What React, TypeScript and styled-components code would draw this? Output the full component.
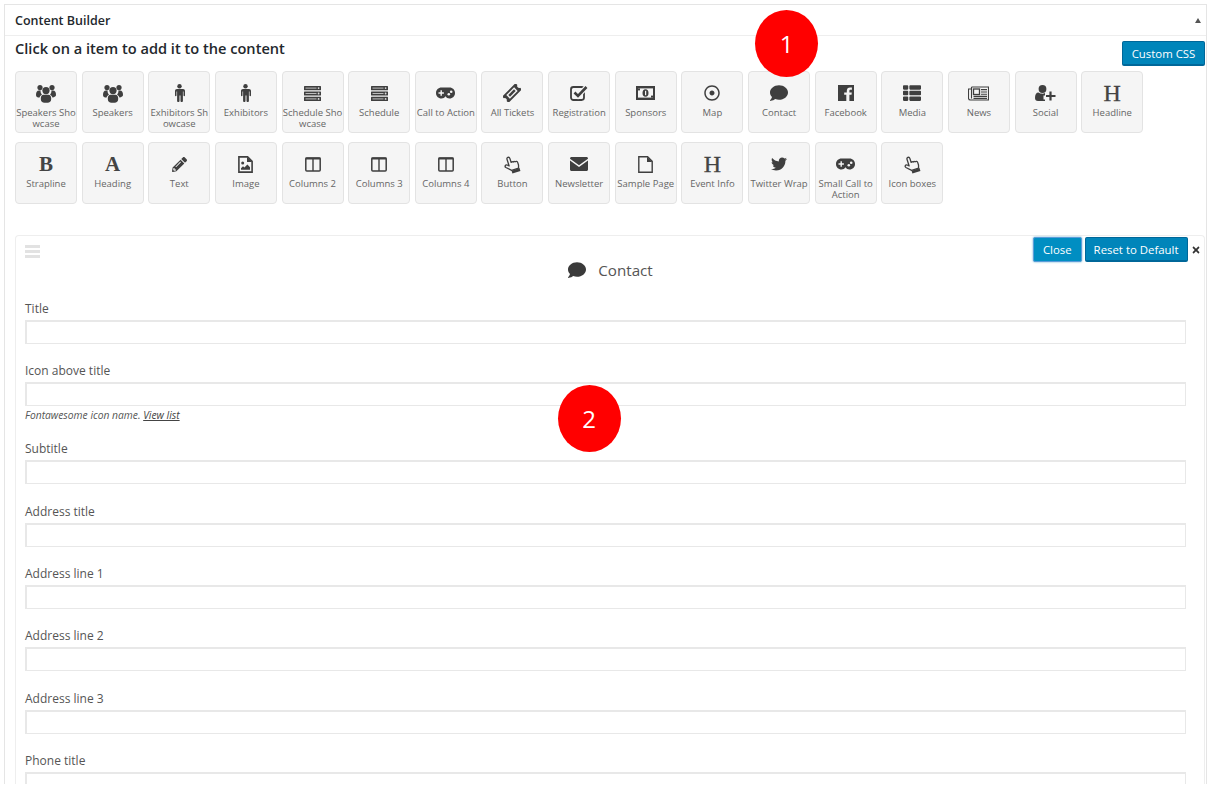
import React from "react";
import styled, { createGlobalStyle } from "styled-components";
import { FaRegDotCircle, FaComment, FaThList, FaPencilAlt, FaTwitter, FaTimes } from "react-icons/fa";

const Global = createGlobalStyle`
  html, body { margin: 0; padding: 0; background: #fff; }
  body { font-family: "Open Sans", "Liberation Sans", sans-serif; color: #444; overflow: hidden; }
`;

const Page = styled.div`
  position: relative;
  height: 802px;
  padding: 4px 5px 0 4px;
  box-sizing: border-box;
`;

const Panel = styled.section`
  height: 780px;
  border: 1px solid #e5e5e5;
  border-bottom: 0;
  box-sizing: border-box;
  overflow: hidden;
  background: #fff;
`;

const PanelHeader = styled.header`
  height: 30px;
  border-bottom: 1px solid #eee;
  display: flex;
  align-items: center;
  justify-content: space-between;
  padding: 0 5px 0 10px;
`;

const PanelTitle = styled.h2`
  margin: 0;
  font-size: 12.5px;
  font-weight: 600;
  color: #23282d;
`;

const Caret = styled.span`
  width: 0;
  height: 0;
  border-left: 3.5px solid transparent;
  border-right: 3.5px solid transparent;
  border-bottom: 5px solid #555;
`;

const Body = styled.div`
  padding: 0 1px 0 10px;
`;

const Intro = styled.div`
  display: flex;
  align-items: flex-start;
  justify-content: space-between;
  height: 35px;
`;

const Lead = styled.p`
  margin: 2px 0 0;
  font-size: 14.6px;
  line-height: 20px;
  font-weight: 600;
  color: #23282d;
`;

const PrimaryButton = styled.button<{ $focus?: boolean }>`
  height: 25px;
  padding: 0 9px;
  border-radius: 2px;
  border: 1px solid ${(p) => (p.$focus ? "#5b9dd9" : "#006799")};
  border-bottom-width: ${(p) => (p.$focus ? "1px" : "2px")};
  background: ${(p) => (p.$focus ? "#008ec2" : "#0085ba")};
  color: #fff;
  font-family: inherit;
  font-size: 11.4px;
  white-space: nowrap;
  box-shadow: ${(p) => (p.$focus ? "0 0 2px rgba(30,140,190,.8)" : "none")};
`;

const ResetButton = styled(PrimaryButton)`
  padding: 0 8px;
`;

const CssButton = styled(PrimaryButton)`
  margin-top: 5px;
  width: 83px;
  padding: 0;
`;

const Tiles = styled.div`
  display: grid;
  grid-template-columns: repeat(17, 62px);
  column-gap: 4.65px;
  row-gap: 9px;
  grid-auto-rows: 62px;
`;

const TileBox = styled.div`
  box-sizing: border-box;
  border: 1px solid #e3e3e3;
  border-radius: 4px;
  background: #f5f5f5;
  display: flex;
  flex-direction: column;
  align-items: center;
  padding: 12px 0 0;
  text-align: center;
`;

const TileIcon = styled.span`
  height: 18px;
  display: flex;
  align-items: center;
  justify-content: center;
  color: #3f3f3f;
`;

const GlyphIcon = styled(TileIcon)<{ $bold: boolean }>`
  font-family: "Liberation Serif", serif;
  font-weight: ${(p) => (p.$bold ? 700 : 400)};
  font-size: ${(p) => (p.$bold ? 21 : 24)}px;
  -webkit-text-stroke: ${(p) => (p.$bold ? "0" : "0.3px")} #444;
  color: #444;
`;

const TileLabel = styled.span<{ $wrap?: boolean }>`
  margin-top: 5px;
  width: 60px;
  flex-shrink: 0;
  font-size: 9.5px;
  line-height: 11px;
  color: #666;
  word-break: ${(p) => (p.$wrap ? "normal" : "break-all")};
`;

const Card = styled.div`
  margin-top: 30.5px;
  border: 1px solid #eee;
  border-bottom: 0;
  border-radius: 4px 4px 0 0;
  padding: 1.5px 0 0 9px;
  height: 560px;
  box-sizing: border-box;
`;

const CardTools = styled.div`
  display: flex;
  align-items: center;
  justify-content: space-between;
  height: 25px;
  padding-right: 3.5px;
`;

const Handle = styled.span`
  display: flex;
  flex-direction: column;
  gap: 2px;
  width: 15px;
  margin-top: 3px;
  span { height: 3px; background: #e2e2e2; }
`;

const ToolGroup = styled.div`
  display: flex;
  align-items: center;
  gap: 3px;
  svg { font-size: 10px; color: #333; }
`;

const CardTitle = styled.h3`
  margin: -1px 0 0;
  height: 18px;
  display: flex;
  align-items: center;
  justify-content: center;
  gap: 12px;
  font-size: 15.2px;
  font-weight: 400;
  color: #555;
  padding: 0 8px 2.4px 0;
  svg { font-size: 18px; color: #3a3a3a; }
`;

const Field = styled.div`
  margin-top: 18.4px;
  padding-right: 18.5px;
`;

const Label = styled.label`
  display: block;
  font-size: 12px;
  line-height: 17px;
  color: #555;
  margin-bottom: 3px;
`;

const TextInput = styled.input`
  display: block;
  box-sizing: border-box;
  width: 100%;
  height: 24px;
  margin: 0;
  border-style: solid;
  border-color: #e8e8e8;
  border-width: 2px 1px 1px 2px;
  background: #fff;
`;

const Help = styled.p`
  margin: 2px 0 -0.4px;
  font-size: 10.3px;
  line-height: 14px;
  font-style: italic;
  color: #555;
  u { color: #444; }
`;

const Marker = styled.div<{ $x: number; $y: number }>`
  position: absolute;
  left: ${(p) => p.$x}px;
  top: ${(p) => p.$y}px;
  width: 63px;
  height: 67px;
  border-radius: 50%;
  background: #ff0000;
  color: #fff;
  font-size: 24px;
  display: flex;
  align-items: center;
  justify-content: center;
`;

const D = "#3f3f3f";
const L = "#f5f5f5";

const Ico = ({ w, h, vb, children }: { w: number; h: number; vb: string; children: React.ReactNode }) => (
  <svg width={w} height={h} viewBox={vb} fill={D}>
    {children}
  </svg>
);

const UsersIcon = () => (
  <Ico w={20} h={19} vb="0 0 20 19">
    <circle cx="4" cy="3.6" r="2.6" />
    <circle cx="16" cy="3.6" r="2.6" />
    <path d="M0 11c0-3 1-4.6 3-4.6h1.6c-.2 1.8.4 3 1.4 4-1.4.8-2.2 1.8-2.4 3.2C1.4 13.6 0 13 0 11z" />
    <path d="M20 11c0-3-1-4.6-3-4.6h-1.6c.2 1.8-.4 3-1.4 4 1.4.8 2.2 1.8 2.4 3.2 2.2-.6 3.6-1.2 3.6-2.6z" />
    <circle cx="10" cy="6.6" r="3.6" />
    <path d="M4.8 14.6c0-2.4 1-3.9 2.8-3.9h4.8c1.8 0 2.8 1.5 2.8 3.9 0 1.8-.4 3.4-2.2 3.9-1.8.4-4.2.4-6 0-1.8-.5-2.2-2.1-2.2-3.9z" />
  </Ico>
);

const MaleIcon = () => (
  <Ico w={11} h={18} vb="0 0 11 18">
    <circle cx="5.5" cy="2.2" r="2.2" />
    <path d="M2 5h7c1.2 0 2 .8 2 2v4.4c0 1-1.5 1-1.5 0V7.6h-.6v9.3c0 1.3-2.4 1.3-2.4 0v-5.4h-1v5.4c0 1.3-2.4 1.3-2.4 0V7.6h-.6v3.8c0 1-1.5 1-1.5 0V7c0-1.2.8-2 2-2z" />
  </Ico>
);

const ServerIcon = () => (
  <Ico w={17} h={15} vb="0 0 17 15">
    {[0, 5.4, 10.8].map((y) => (
      <g key={y}>
        <rect x="0" y={y} width="17" height="4.2" rx=".5" />
        <rect x="1.5" y={y + 1.6} width="11" height="1" fill="#bbb" />
        <circle cx="14.6" cy={y + 2.1} r=".9" fill="#ddd" />
      </g>
    ))}
  </Ico>
);

const GamepadIcon = () => (
  <Ico w={19} h={12} vb="0 0 19 12">
    <path d="M5.5 0.5h8c3.2 0 5.5 2.4 5.5 5.5s-2.3 5.5-5.5 5.5c-1.7 0-3-.8-4-2.2-1 1.4-2.3 2.2-4 2.2C2.300 11.500 0 9.100 0 6S2.300.5 5.500.5z" />
    <path d="M4.500 3.300h1.400v2h2v1.400h-2v2H4.500v-2h-2V5.300h2z" fill={L} />
    <circle cx="12.800" cy="7.300" r="1.300" fill={L} />
    <circle cx="15.200" cy="4.800" r="1.300" fill={L} />
  </Ico>
);

const TicketIcon = () => (
  <Ico w={18} h={18} vb="0 0 18 18">
    <g transform="rotate(-45 9 9)">
      <path d="M-0.500 4.500h19v2.600a2 2 0 0 0 0 3.800v2.600h-19v-2.600a2 2 0 0 0 0-3.800z" />
      <rect x="3.500" y="6.500" width="11" height="5" fill={L} />
      <rect x="5" y="7.800" width="8" height="2.400" />
    </g>
  </Ico>
);

const CheckSquareIcon = () => (
  <Ico w={18} h={16} vb="0 0 18 16">
    <rect x="1" y="2" width="13" height="13" rx="2.400" fill="none" stroke={D} strokeWidth="1.800" />
    <path d="M4.500 7.500l3.500 3.500 8.500-9" fill="none" stroke={L} strokeWidth="5" />
    <path d="M4.500 7.500l3.500 3.500 8.500-9" fill="none" stroke={D} strokeWidth="2.600" />
  </Ico>
);

const MoneyIcon = () => (
  <Ico w={19} h={14} vb="0 0 19 14">
    <rect x="0" y="0" width="19" height="14" />
    <rect x="2" y="2.400" width="15" height="9.200" fill={L} />
    <rect x="2" y="2.400" width="2" height="2" />
    <rect x="15" y="9.600" width="2" height="2" />
    <ellipse cx="9.500" cy="7" rx="3" ry="3.800" />
    <rect x="9" y="4.800" width="1.200" height="4.400" fill={L} />
  </Ico>
);

const FacebookIcon = () => (
  <Ico w={16} h={16} vb="0 0 16 16">
    <path d="M0 0h16v16h-4.600V9.800h2.100l.3-2.400h-2.400V5.900c0-.7.2-1.200 1.200-1.200h1.300V2.500c-.2 0-1-.1-1.900-.1-1.900 0-3.200 1.200-3.200 3.300v1.700H6.200v2.400h2.100V16H0z" />
  </Ico>
);

const NewsIcon = () => (
  <Ico w={21} h={15} vb="0 0 21 15">
    <path d="M3.500 1h17v13H2.500a2 2 0 0 1-2-2V3h3M3.500 1v11.500" fill="none" stroke={D} strokeWidth="1.100" />
    <rect x="5.500" y="3" width="6" height="5.500" fill="none" stroke={D} strokeWidth="1.300" />
    <path d="M13 3.600h6M13 6h6M13 8.200h6M5.500 10.400h13.500M5.500 12.400h13.500" stroke={D} strokeWidth="1.100" />
  </Ico>
);

const UserPlusIcon = () => (
  <Ico w={21} h={16} vb="0 0 21 16">
    <circle cx="7.500" cy="4" r="3.900" />
    <path d="M0 13c0-3.500 1.200-5.500 3.500-5.500 1 .8 2.500 1.200 4 1.200 1 0 1.700-.2 2.500-.6v2.500H8.500v3.800H10V16H3c-2 0-3-1.200-3-3z" />
    <path d="M15.500 6.500v9M11 11h9.500" stroke={D} strokeWidth="2.200" />
  </Ico>
);

const ImageIcon = () => (
  <Ico w={15} h={17} vb="0 0 15 17">
    <path d="M.9.900h8.700l4.500 4.500v10.700H.9z" fill="none" stroke={D} strokeWidth="1.600" />
    <path d="M9 .900v5h5.100z" />
    <circle cx="4.700" cy="7" r="1.500" />
    <path d="M3 13.800v-1.600l2-2 1.400 1.400 3-3.200 2.600 2.800v2.600z" />
  </Ico>
);

const ColumnsIcon = () => (
  <Ico w={16} h={15} vb="0 0 16 15">
    <rect x=".8" y="1" width="14.400" height="13" rx="1" fill="none" stroke={D} strokeWidth="1.500" />
    <rect x="7.300" y="1" width="1.400" height="13" />
    <rect x=".5" y=".5" width="15" height="2" />
  </Ico>
);

const HandIcon = () => (
  <Ico w={18} h={19} vb="0 0 18 19">
    <g transform="rotate(-18 9 10)">
      <path
        d="M6 3c0-2 3-2 3 0v4.300c.5-.4 1.500-.4 2 .2.600-.3 1.500-.2 2 .4.900-.3 2.200.2 2.200 1.600v2.500l-.9 3H7L2.400 10.500C1.200 9 3 7.400 4.400 8.500L6 10z"
        fill={L}
        stroke={D}
        strokeWidth="1.300"
        strokeLinejoin="round"
      />
      <rect x="6.800" y="15.200" width="8.400" height="3" />
    </g>
  </Ico>
);

const EnvelopeIcon = () => (
  <Ico w={18} h={14} vb="0 0 18 14">
    <path d="M1.500 0h15c.8 0 1.500.7 1.500 1.500v11c0 .8-.7 1.500-1.500 1.500h-15C.7 14 0 13.300 0 12.500v-11C0 .7.700 0 1.500 0z" />
    <path d="M-.5 2.200L9 9l9.500-6.800" fill="none" stroke={L} strokeWidth="1.500" />
  </Ico>
);

const FileIcon = () => (
  <Ico w={15} h={17} vb="0 0 15 17">
    <path d="M.8.800h8.800l4.600 4.600v10.800H.8z" fill="none" stroke={D} strokeWidth="1.400" />
    <path d="M9 .800v5.200h5.200z" />
  </Ico>
);

type Tile = { label: string; icon: React.ReactNode; glyph?: boolean; bold?: boolean; wrap?: boolean };

const tiles: Tile[] = [
  { label: "Speakers Showcase", icon: <UsersIcon /> },
  { label: "Speakers", icon: <UsersIcon /> },
  { label: "Exhibitors Showcase", icon: <MaleIcon /> },
  { label: "Exhibitors", icon: <MaleIcon /> },
  { label: "Schedule Showcase", icon: <ServerIcon /> },
  { label: "Schedule", icon: <ServerIcon /> },
  { label: "Call to Action", icon: <GamepadIcon /> },
  { label: "All Tickets", icon: <TicketIcon /> },
  { label: "Registration", icon: <CheckSquareIcon /> },
  { label: "Sponsors", icon: <MoneyIcon /> },
  { label: "Map", icon: <FaRegDotCircle size={16} /> },
  { label: "Contact", icon: <FaComment size={18} /> },
  { label: "Facebook", icon: <FacebookIcon /> },
  { label: "Media", icon: <FaThList size={18} /> },
  { label: "News", icon: <NewsIcon /> },
  { label: "Social", icon: <UserPlusIcon /> },
  { label: "Headline", icon: "H", glyph: true },
  { label: "Strapline", icon: "B", glyph: true, bold: true },
  { label: "Heading", icon: "A", glyph: true, bold: true },
  { label: "Text", icon: <FaPencilAlt size={15} /> },
  { label: "Image", icon: <ImageIcon /> },
  { label: "Columns 2", icon: <ColumnsIcon /> },
  { label: "Columns 3", icon: <ColumnsIcon /> },
  { label: "Columns 4", icon: <ColumnsIcon /> },
  { label: "Button", icon: <HandIcon /> },
  { label: "Newsletter", icon: <EnvelopeIcon /> },
  { label: "Sample Page", icon: <FileIcon /> },
  { label: "Event Info", icon: "H", glyph: true },
  { label: "Twitter Wrap", icon: <FaTwitter size={16} /> },
  { label: "Small Call to Action", icon: <GamepadIcon />, wrap: true },
  { label: "Icon boxes", icon: <HandIcon /> },
];

const fields = [
  "Title",
  "Icon above title",
  "Subtitle",
  "Address title",
  "Address line 1",
  "Address line 2",
  "Address line 3",
  "Phone title",
];

export default function App() {
  return (
    <Page>
      <Global />
      <Panel>
        <PanelHeader>
          <PanelTitle>Content Builder</PanelTitle>
          <Caret />
        </PanelHeader>
        <Body>
          <Intro>
            <Lead>Click on a item to add it to the content</Lead>
            <CssButton>Custom CSS</CssButton>
          </Intro>
          <Tiles>
            {tiles.map((t, i) => (
              <TileBox key={i}>
                {t.glyph ? <GlyphIcon $bold={!!t.bold}>{t.icon}</GlyphIcon> : <TileIcon>{t.icon}</TileIcon>}
                <TileLabel $wrap={t.wrap}>{t.label}</TileLabel>
              </TileBox>
            ))}
          </Tiles>
          <Card>
            <CardTools>
              <Handle>
                <span />
                <span />
                <span />
              </Handle>
              <ToolGroup>
                <PrimaryButton $focus>Close</PrimaryButton>
                <ResetButton>Reset to Default</ResetButton>
                <FaTimes />
              </ToolGroup>
            </CardTools>
            <CardTitle>
              <FaComment />
              Contact
            </CardTitle>
            {fields.map((f) => (
              <Field key={f}>
                <Label>{f}</Label>
                <TextInput />
                {f === "Icon above title" && (
                  <Help>
                    Fontawesome icon name. <u>View list</u>
                  </Help>
                )}
              </Field>
            ))}
          </Card>
        </Body>
      </Panel>
      <Marker $x={755} $y={10}>1</Marker>
      <Marker $x={557.5} $y={385}>2</Marker>
    </Page>
  );
}
